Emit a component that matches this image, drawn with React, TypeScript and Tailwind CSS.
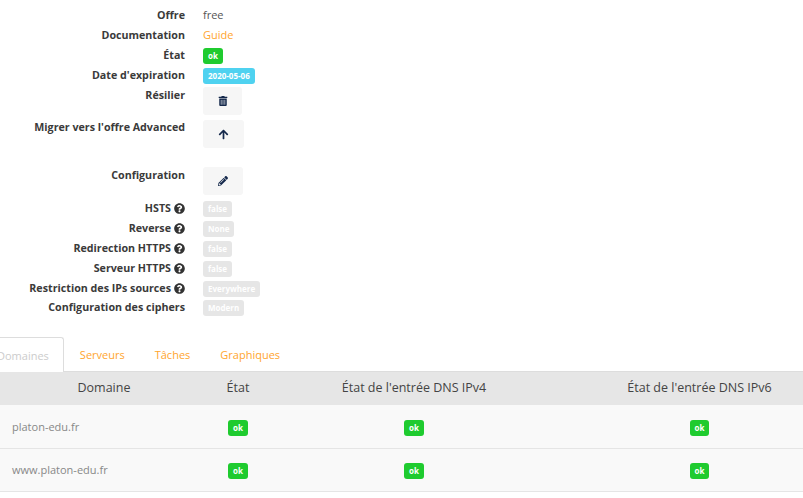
import { FaArrowUp, FaPencilAlt, FaQuestionCircle, FaTrashAlt } from "react-icons/fa";
import type { ReactNode } from "react";

const font = "font-['Open_Sans',sans-serif]";

function Badge({ color, children }: { color: string; children: ReactNode }) {
  return (
    <span className={`inline-block h-4 rounded-[3px] px-[5px] text-[8px] font-bold leading-4 text-white ${color}`}>
      {children}
    </span>
  );
}

function IconButton({ width, mt, children }: { width: string; mt: string; children: ReactNode }) {
  return (
    <button className={`flex h-7 items-center justify-center rounded-[3px] bg-[#f6f6f6] text-[#14284b] ${width} ${mt}`}>
      {children}
    </button>
  );
}

function Row({ label, help, className, children }: { label: string; help?: boolean; className: string; children: ReactNode }) {
  return (
    <div className={`flex ${className}`}>
      <div className="flex w-[185px] shrink-0 justify-end gap-[3px] text-[10.7px] font-bold leading-5 text-[#3a3a3a]">
        {label}
        {help && <FaQuestionCircle className="mt-[5px] text-[11px] text-[#333]" />}
      </div>
      <div className="ml-[18px] flex-1 text-[11px] leading-5 text-[#555]">{children}</div>
    </div>
  );
}

const grey = "bg-[#e6e6e6]";
const green = "bg-[#1fcb2f]";
const tab = "px-[15px] leading-[35px] text-[#ffa52e]";
const columns = "grid grid-cols-[208px_60px_292px_279px]";
const small = "h-[19.8px]";

export default function App() {
  const rows = ["platon-edu.fr", "www.platon-edu.fr"];
  return (
    <div className={`h-[498px] w-[803px] overflow-hidden bg-white ${font}`}>
      <div className="pt-[5px]">
        <Row label="Offre" className="h-5">free</Row>
        <Row label="Documentation" className="h-5"><span className="text-[#ffa52e]">Guide</span></Row>
        <Row label="État" className="h-5"><Badge color={green}>ok</Badge></Row>
        <Row label="Date d'expiration" className="h-5"><Badge color="bg-[#4fd2f0]">2020-05-06</Badge></Row>
        <Row label="Résilier" className="h-8">
          <IconButton width="w-[39px]" mt="mt-[2px]"><FaTrashAlt className="text-[10px]" /></IconButton>
        </Row>
        <Row label="Migrer vers l'offre Advanced" className="h-12">
          <IconButton width="w-[41px]" mt="mt-[3px]"><FaArrowUp className="text-[11px]" /></IconButton>
        </Row>
        <Row label="Configuration" className="h-[33.4px]">
          <IconButton width="w-10" mt="mt-[2px]"><FaPencilAlt className="text-[10px]" /></IconButton>
        </Row>
        <Row label="HSTS" help className={small}><Badge color={grey}>false</Badge></Row>
        <Row label="Reverse" help className={small}><Badge color={grey}>None</Badge></Row>
        <Row label="Redirection HTTPS" help className={small}><Badge color={grey}>false</Badge></Row>
        <Row label="Serveur HTTPS" help className={small}><Badge color={grey}>false</Badge></Row>
        <Row label="Restriction des IPs sources" help className={small}><Badge color={grey}>Everywhere</Badge></Row>
        <Row label="Configuration des ciphers" className={small}><Badge color={grey}>Modern</Badge></Row>
      </div>

      <div className="mt-[19.8px] -ml-[19px] flex h-[35px] text-[11px]">
        <div className="relative z-10 mr-px h-[35px] rounded-t-[3px] border border-b-0 border-[#ddd] bg-white pr-[14px] pl-[15px] leading-[35px] text-[#ccc]">Domaines</div>
        <div className={tab}>Serveurs</div>
        <div className={tab}>Tâches</div>
        <div className={tab}>Graphiques</div>
      </div>

      <div className="-mt-px w-[839px]">
        <div className={`${columns} h-[34.5px] items-center border-t border-[#ddd] bg-[#e6e6e6] text-center text-[12.5px] text-[#444]`}>
          <div>Domaine</div>
          <div>État</div>
          <div>État de l'entrée DNS IPv4</div>
          <div>État de l'entrée DNS IPv6</div>
        </div>
        {rows.map((name) => (
          <div key={name} className={`${columns} h-[43.5px] border-b border-[#e5e5e5] bg-[#f9f9f9] pt-[14.5px] text-center leading-4`}>
            <div className="-mt-[1.2px] pl-3 text-left text-[11px] text-[#888]">{name}</div>
            <div className="flex justify-center"><Badge color={green}>ok</Badge></div>
            <div className="flex justify-center"><Badge color={green}>ok</Badge></div>
            <div className="flex justify-center"><Badge color={green}>ok</Badge></div>
          </div>
        ))}
      </div>
    </div>
  );
}
